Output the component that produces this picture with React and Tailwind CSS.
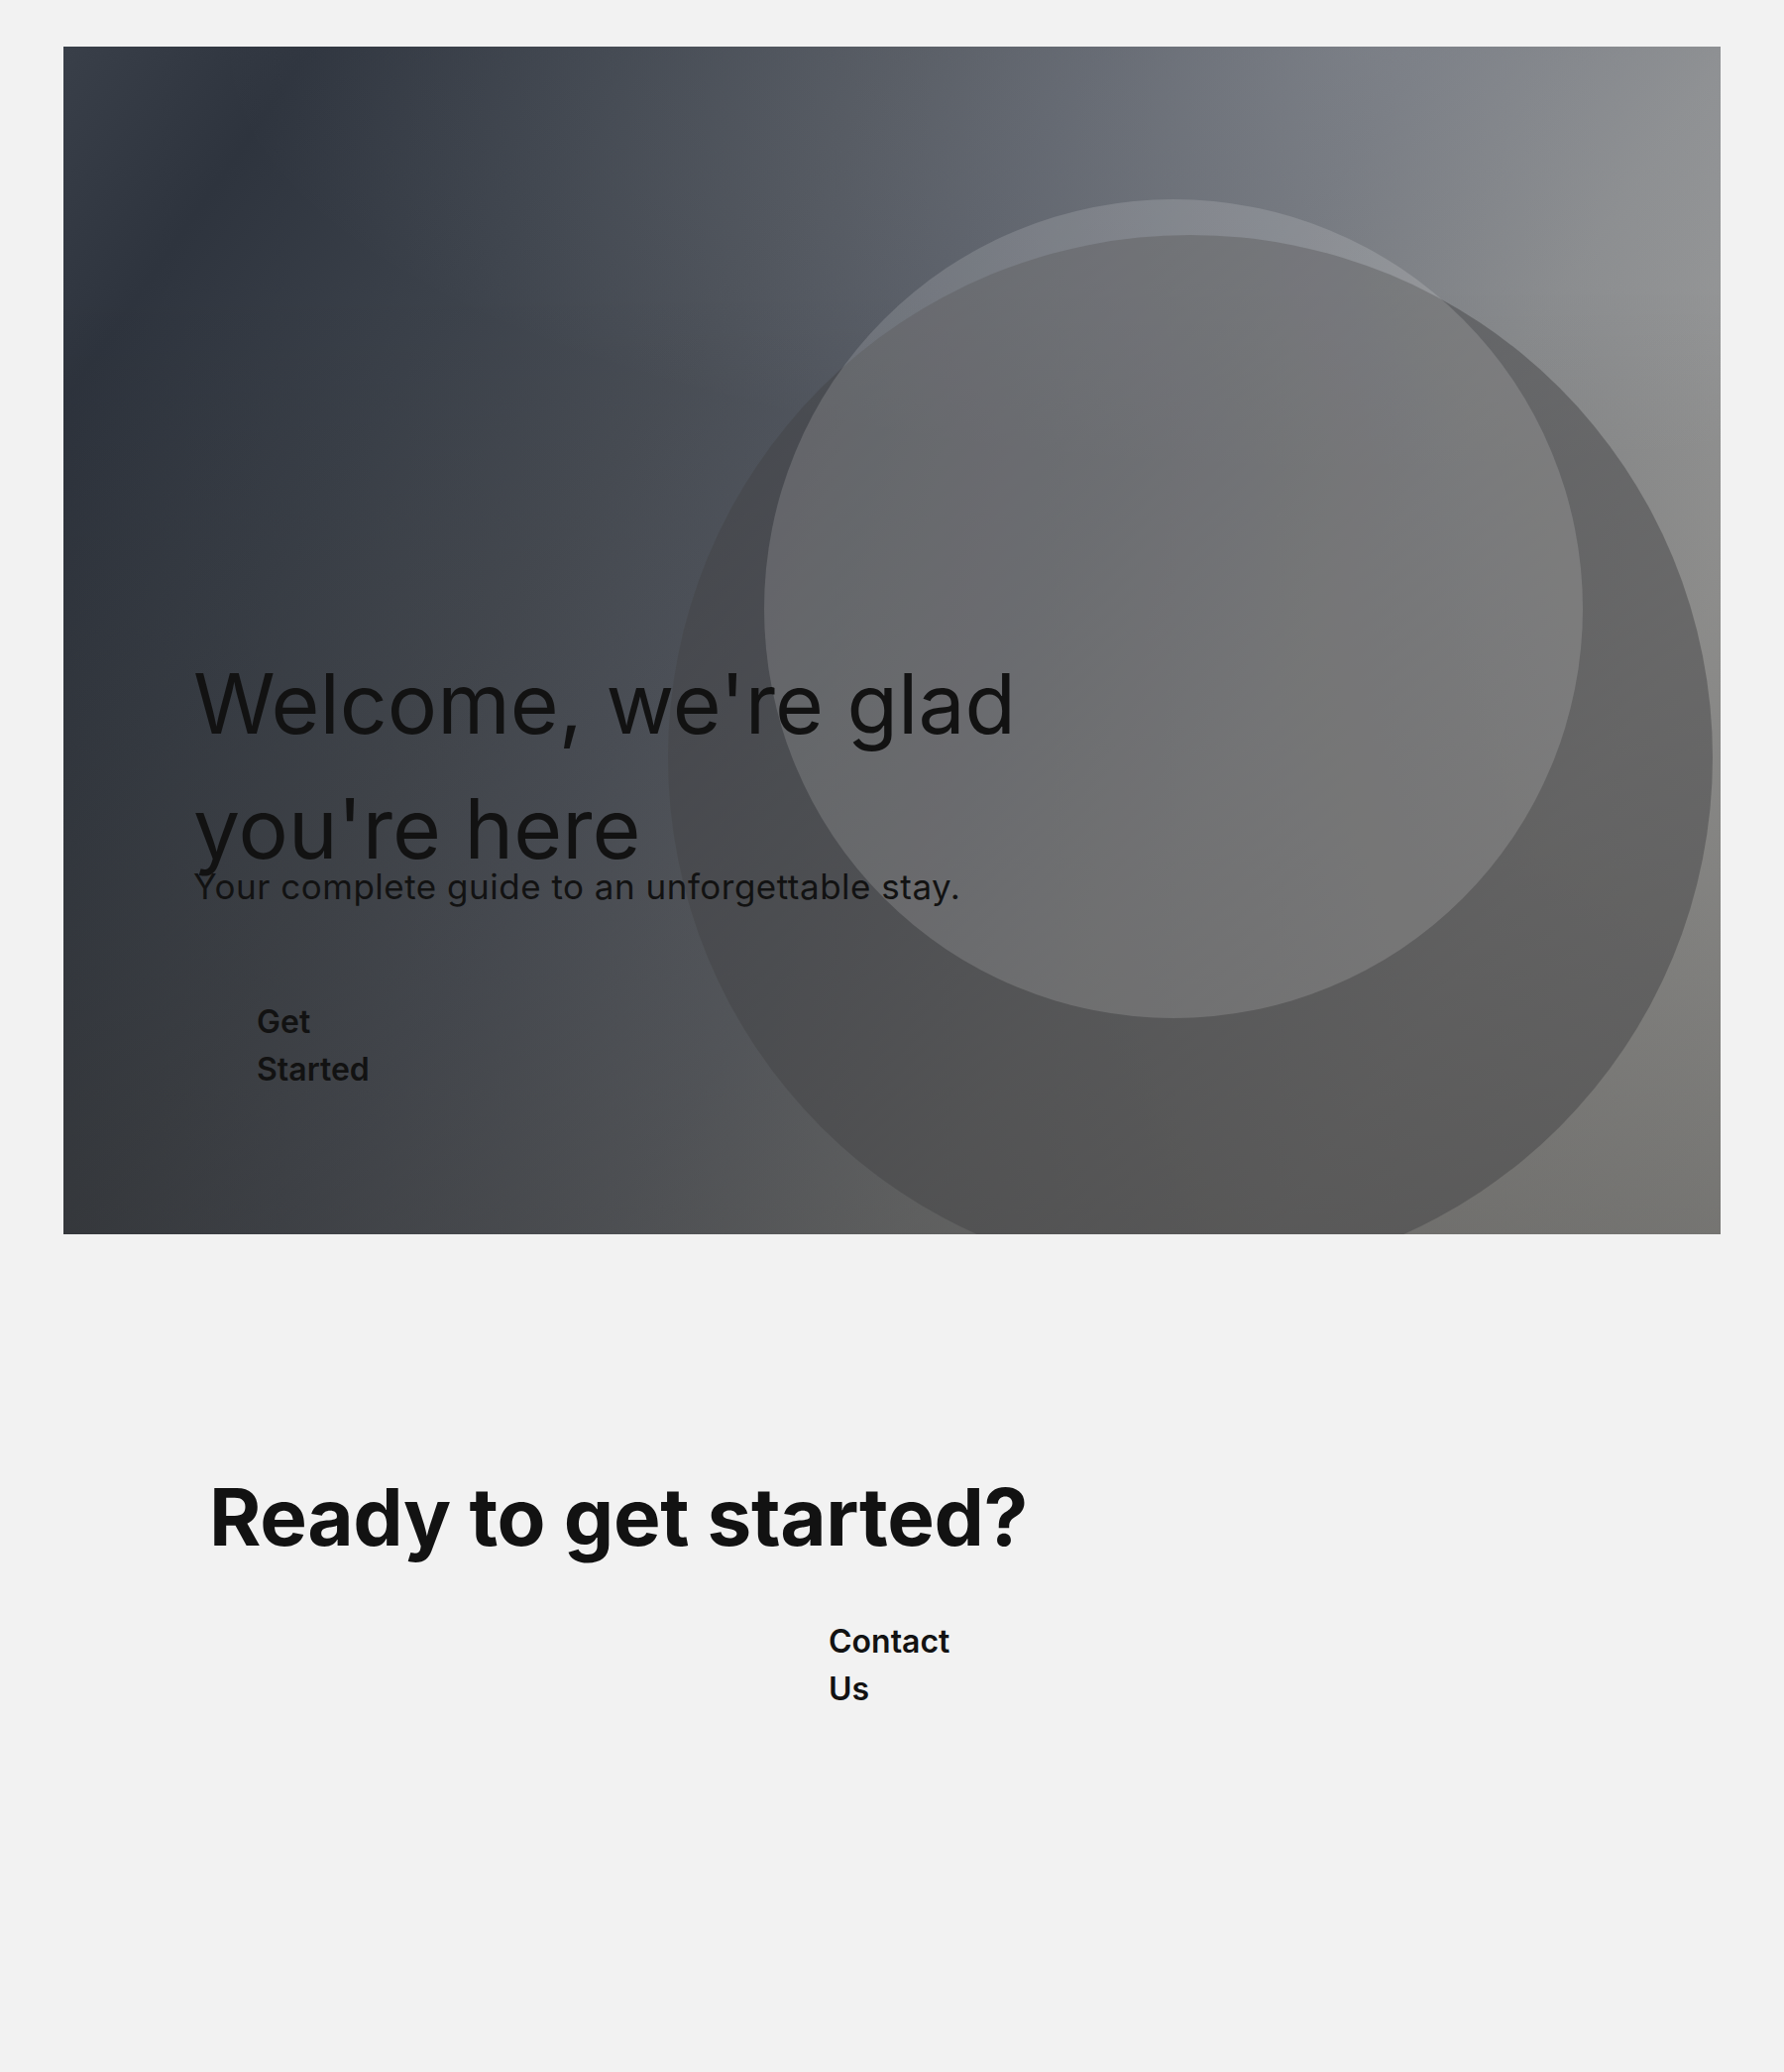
import React from "react";

export default function App() {
  return (
    <div className="min-h-screen bg-[#f2f2f2] font-['Inter',_'Noto_Sans',_sans-serif] text-[#121212]">
      <div className="pt-[47px] px-[64px]">
        <section className="relative h-[1198px] overflow-hidden bg-[linear-gradient(125deg,#393f49_0%,#2e343e_10%,#3c424b_23%,#4a4f57_34%,#555a63_42%,#6b6f76_55%,#858789_67%,#9c9c9b_82%,#a8a8a6_100%)]">
          <div className="pointer-events-none absolute inset-0 bg-[radial-gradient(1150px_430px_at_78%_0%,rgba(205,208,215,0.2),rgba(205,208,215,0))]" />
          <div className="pointer-events-none absolute inset-0 bg-[linear-gradient(to_bottom,rgba(10,8,4,0)_20%,rgba(10,8,4,0.32)_100%)]" />
          <div className="pointer-events-none absolute left-[610px] top-[190px] h-[1054px] w-[1054px] rounded-full bg-[rgba(66,66,68,0.48)]" />
          <div className="pointer-events-none absolute left-[707px] top-[154px] h-[826px] w-[826px] rounded-full bg-[rgba(255,255,255,0.15)]" />

          <div className="relative flex flex-col items-start pl-[131px] pt-[600px]">
            <h1 className="max-w-[900px] text-[84px] font-normal leading-[126px]">
              Welcome, we're glad you're here
            </h1>
            <p className="-mt-[29px] text-[35px] leading-[48px] tracking-[0.5px]">
              Your complete guide to an unforgettable stay.
            </p>
            <button className="mt-[57px] w-[252px] px-16 py-8 text-left text-[32px] font-semibold leading-[48px]">
              Get Started
            </button>
          </div>
        </section>
      </div>

      <section className="mt-[237px] flex flex-col">
        <h2 className="pl-[211px] text-[80px] font-bold leading-[96px] tracking-[-0.4px]">
          Ready to get started?
        </h2>
        <button className="mt-[22px] w-[256px] self-center px-16 py-8 text-left text-[32px] font-semibold leading-[48px]">
          Contact Us
        </button>
      </section>
    </div>
  );
}
